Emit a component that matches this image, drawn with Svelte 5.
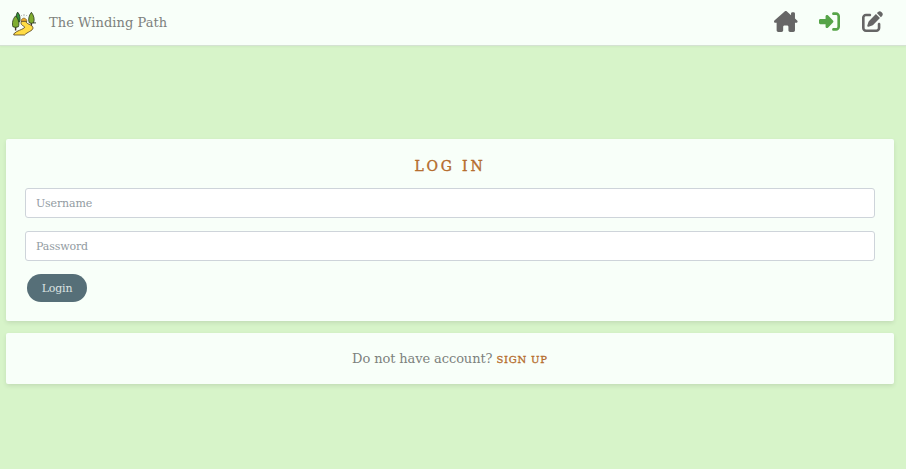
<script>
  let username = $state('');
  let password = $state('');
</script>

<div class="page">
  <nav>
    <a class="brand" href="#home">
      <svg class="logo" viewBox="0 0 24 24">
        <path d="M3.6 15v4M19.4 11v4" stroke="#46362a" stroke-width="1.4" />
        <path d="M5.6 .6C8 3 8.6 7 7.6 10.5H4.6C3.8 7 3.8 3 5.6 .6Z" fill="#2f9138" stroke="#27351d" stroke-width=".8" />
        <path d="M3.6 4.4C6.4 7 7.6 12 6.4 15.2Q3.6 16.6 .9 15.2C-.3 12 .9 7 3.6 4.4Z" fill="#80ad30" stroke="#27351d" stroke-width=".8" />
        <path d="M19.4 .8C22 4 22.8 8.2 21.6 11.2Q19.4 12.4 17.2 11.2C16 8 16.8 4 19.4 .8Z" fill="#80ad30" stroke="#27351d" stroke-width=".8" />
        <path d="M9.2 8.6Q11.8 4.4 14.8 8.6v1.4H9.2z" fill="#f0ae2c" stroke="#49351e" stroke-width=".5" />
        <path d="M12 2.6v2M9 3.6l1 1M15 3.6l-1 1" stroke="#777" stroke-width=".6" />
        <path d="M21 11.4h3" stroke="#27351d" stroke-width=".9" />
        <path d="M9.6 9.8C8.2 12 9.4 13.6 12.2 15C14.4 16.4 8.4 18.2 4.8 20L1.8 22.3V23.5H12.6C15 20.6 21 19.4 21 16.4C21 13.2 13 12.4 14.4 9.8Z" fill="#ffdc45" stroke="#4b3a20" stroke-width=".8" />
      </svg>
      <span>The Winding Path</span>
    </a>
    <div class="links">
      <a class="house" href="#home" aria-label="Home">
        <svg width="23.6" height="21" viewBox="0 0 576 512"><path d="M575.8 255.5c0 18-15 32.1-32 32.1h-32l.7 160.2c0 2.7-.2 5.4-.5 8.1V472c0 22.1-17.9 40-40 40H456c-1.1 0-2.2 0-3.3-.1c-1.4 .1-2.8 .1-4.2 .1H416 392c-22.1 0-40-17.9-40-40V448 384c0-17.7-14.3-32-32-32H256c-17.7 0-32 14.3-32 32v64 24c0 22.1-17.9 40-40 40H160 128.1c-1.5 0-3-.1-4.5-.2c-1.2 .1-2.4 .2-3.6 .2H104c-22.1 0-40-17.9-40-40V360c0-.9 0-1.9 .1-2.8V287.6H32c-18 0-32-14-32-32.1c0-9 3-17 10-24L266.4 8c7-7 15-8 22-8s15 2 21 7L416 100.7V64c0-17.7 14.3-32 32-32h32c17.7 0 32 14.3 32 32V185l52.8 46.4c8 7 12 15 11 24z" /></svg>
      </a>
      <a class="active" href="#login" aria-label="Log in">
        <svg width="21" height="21" viewBox="0 0 512 512"><path d="M217.9 105.9L340.7 228.7c7.2 7.2 11.3 17.1 11.3 27.3s-4.1 20.1-11.3 27.3L217.9 406.1c-6.4 6.4-15 9.9-24 9.9c-18.7 0-33.9-15.2-33.9-33.9l0-62.1L32 320c-17.7 0-32-14.3-32-32l0-64c0-17.7 14.3-32 32-32l128 0 0-62.1c0-18.7 15.2-33.9 33.9-33.9c9 0 17.6 3.6 24 9.9zM352 416l64 0c17.7 0 32-14.3 32-32l0-256c0-17.7-14.3-32-32-32l-64 0c-17.7 0-32-14.3-32-32s14.3-32 32-32l64 0c53 0 96 43 96 96l0 256c0 53-43 96-96 96l-64 0c-17.7 0-32-14.3-32-32s14.3-32 32-32z" /></svg>
      </a>
      <a href="#signup" aria-label="Sign up">
        <svg width="21" height="21" viewBox="0 0 512 512"><path d="M471.6 21.7c-21.9-21.9-57.3-21.9-79.2 0L362.3 51.7l97.9 97.9 30.1-30.1c21.9-21.9 21.9-57.3 0-79.2L471.6 21.7zm-299.2 220c-6.1 6.1-10.8 13.6-13.5 21.9l-29.6 88.8c-2.9 8.6-.6 18.1 5.8 24.6s15.9 8.7 24.6 5.8l88.8-29.6c8.2-2.7 15.7-7.4 21.9-13.5L437.7 172.3 339.7 74.3 172.4 241.7zM96 64C43 64 0 107 0 160V416c0 53 43 96 96 96H352c53 0 96-43 96-96V320c0-17.7-14.3-32-32-32s-32 14.3-32 32v96c0 17.7-14.3 32-32 32H96c-17.7 0-32-14.3-32-32V160c0-17.7 14.3-32 32-32h96c17.7 0 32-14.3 32-32s-14.3-32-32-32H96z" /></svg>
      </a>
    </div>
  </nav>
  <main>
    <section class="form-card">
      <h1>LOG IN</h1>
      <form onsubmit={(e) => e.preventDefault()}>
        <input type="text" placeholder="Username" aria-label="Username" bind:value={username} />
        <input type="password" placeholder="Password" aria-label="Password" bind:value={password} />
        <button type="submit">Login</button>
      </form>
    </section>
    <section class="signup">
      <span class="question">Do not have account?</span>
      <a href="#signup">SIGN UP</a>
    </section>
  </main>
</div>

<style>
  :global(body) { margin: 0; background: #d7f4c9; }
  .page, input, button { font-family: "DejaVu Serif", serif; }
  .page { min-height: 469px; background: #d7f4c9; color: #7d817d; }
  nav { box-sizing: border-box; height: 46px; padding: 0 23px 2px 12px; display: flex; align-items: center; justify-content: space-between; background: #f8fff9; border-bottom: 1px solid #d5e2d3; box-shadow: 0 1px 2px #0000000a; }
  a { text-decoration: none; color: inherit; }
  .brand { display: flex; align-items: center; gap: 13px; font-size: 13px; letter-spacing: .05px; }
  .brand span { padding-top: 1px; }
  .logo { width: 24px; height: 25px; fill: none; margin-top: 3px; }
  .links { display: flex; align-items: center; gap: 22px; color: #666; }
  .links a { display: flex; }
  .links .house { margin-right: -.8px; }
  .links svg { fill: currentColor; }
  .links .active { color: #56a448; }
  main { padding: 93px 12px 0 6px; }
  section { box-sizing: border-box; background: #f8fff9; border-radius: 2px; box-shadow: 0 2px 4px #00000018; }
  .form-card { height: 182px; padding: 17px 19px 0; }
  h1 { margin: 0 0 12px; height: 20px; line-height: 20px; font-size: 14px; font-weight: 400; letter-spacing: 2.8px; text-align: center; color: #b56c2c; -webkit-text-stroke: .35px #b56c2c; }
  form { display: flex; flex-direction: column; align-items: flex-start; }
  input { box-sizing: border-box; width: 100%; height: 30px; margin: 0 0 13px; padding: 0 10px; border: 1px solid #ced4da; border-radius: 3px; background: #fff; font-size: 11px; letter-spacing: -.15px; color: #495057; outline: none; }
  input::placeholder { color: #929ba2; opacity: 1; }
  button { width: 60px; height: 28px; margin-left: 2px; padding: 0; border: 0; border-radius: 14px; background: #566f78; color: #dbe3e2; font-size: 11px; letter-spacing: -.2px; }
  .signup { height: 51px; margin-top: 12px; display: flex; align-items: center; justify-content: center; gap: 4px; }
  .question { font-size: 13px; letter-spacing: -.1px; }
  .signup a { margin-top: 2px; color: #b56c2c; font-size: 10px; letter-spacing: .8px; -webkit-text-stroke: .3px #b56c2c; }
</style>
